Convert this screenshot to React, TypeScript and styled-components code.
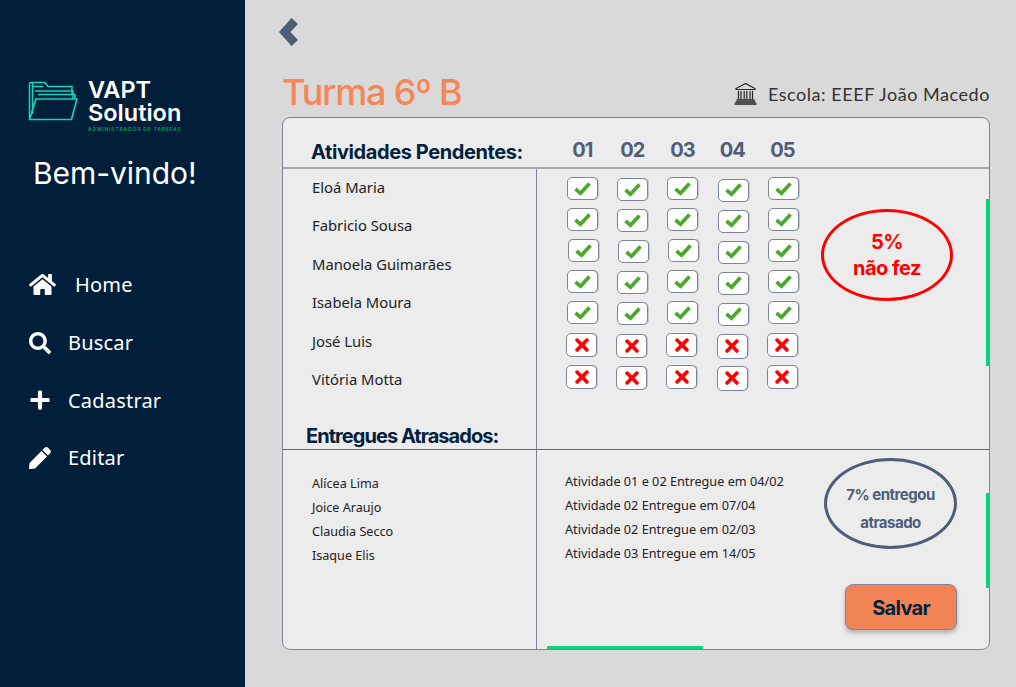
import React from "react";
import styled, { createGlobalStyle } from "styled-components";
import { FaHome, FaSearch, FaPlus, FaPen, FaTimes } from "react-icons/fa";

const Global = createGlobalStyle`
  html, body { margin: 0; padding: 0; height: 100%; overflow: hidden; }
  body { font-family: "Noto Sans", "Liberation Sans", sans-serif; }
  * { box-sizing: border-box; }
`;

const Page = styled.div`display: flex; width: 1016px; height: 687px; background: #d9d9d9;`;
const Sidebar = styled.aside`width: 245px; height: 100%; background: #011f3b; display: flex; flex-direction: column; padding: 80px 0 0 28px;`;
const Brand = styled.div`display: flex; gap: 10px; height: 53px;`;
const BrandText = styled.div`display: flex; flex-direction: column; color: #fff; font-family: Inter, sans-serif; font-weight: 600; font-size: 23.5px; line-height: 23px; margin-top: -2px;`;
const Tagline = styled.span`font-size: 5px; line-height: 6px; font-weight: 600; letter-spacing: 0.82px; color: #0a9c63; margin-top: 2px; white-space: nowrap;`;
const Welcome = styled.h2`margin: 23px 0 0 5px; color: #fff; font-family: Inter, sans-serif; font-weight: 400; font-size: 30px; line-height: 34px; letter-spacing: -0.05px;`;
const Nav = styled.nav`display: flex; flex-direction: column; margin-top: 66px;`;
const NavItem = styled.a<{ $gap: number }>`display: flex; align-items: center; height: 57.7px; color: #fff; font-size: 20px; gap: ${(p) => p.$gap}px; letter-spacing: 0.2px;`;
const NavIcon = styled.span`display: flex; width: 22px; margin-left: 1px; justify-content: flex-start; font-size: 22px; flex: none; > svg { flex: none; }`;

const Main = styled.main`flex: 1; display: flex; flex-direction: column; padding: 18px 26px 0 37px;`;
const Back = styled.svg`display: block; width: 20px; height: 28px; margin-left: -3px; fill: #4f5d78; flex: none;`;
const TitleRow = styled.div`display: flex; justify-content: space-between; align-items: center; height: 71px; padding-top: 20px;`;
const Title = styled.h1`margin: 0; font-family: Inter, sans-serif; font-weight: 500; font-size: 36px; line-height: 44px; color: #f58657; letter-spacing: -1.2px;`;
const School = styled.div`display: flex; align-items: center; gap: 11px; font-family: Lato, sans-serif; font-size: 18px; color: #333; letter-spacing: 0.55px; margin-top: 4px;`;

const Panel = styled.section`position: relative; height: 533px; background: #ececec; border: 1px solid #7c8598; border-radius: 8px; display: grid; grid-template-columns: 254px 1fr; grid-template-rows: 51px 281px 1fr;`;
const HeadRow = styled.div`grid-column: 1 / 3; display: flex; align-items: flex-end; border-bottom: 2px solid #a5a6ad; padding: 0 0 4px 28px;`;
const Heading = styled.h3`margin: 0; font-family: Inter, sans-serif; font-weight: 700; font-size: 20px; line-height: 26px; color: #03213d; letter-spacing: -0.4px; white-space: nowrap;`;
const PendingHeading = styled(Heading)`margin-bottom: -2px;`;
const Nums = styled.div`display: flex; margin-left: 34.5px;`;
const Num = styled.span`width: 50px; text-align: center; font-family: Inter, sans-serif; font-weight: 700; font-size: 20px; line-height: 26px; color: #4f5d78; letter-spacing: -1px;`;

const LeftCell = styled.div<{ $bottom?: boolean }>`border-right: 1px solid #7c8598; display: flex; flex-direction: column; padding-left: 29px; ${(p) => p.$bottom && "border-bottom: 1px solid #5a6680;"}`;
const Names = styled.div<{ $step: number; $size: number }>`display: flex; flex-direction: column; font-size: ${(p) => p.$size}px; color: #222; > span { height: ${(p) => p.$step}px; line-height: ${(p) => p.$step}px; }`;
const PendingNames = styled(Names)`margin-top: -1px;`;
const LateHeading = styled(Heading)`margin: auto 0 0 -6px; letter-spacing: -0.95px;`;
const RightCell = styled.div<{ $bottom?: boolean }>`display: flex; ${(p) => p.$bottom && "border-bottom: 1px solid #5a6680;"}`;

const Checks = styled.div`display: flex; flex-direction: column; flex: none; width: 284px; padding: 8px 0 0 30px;`;
const CheckRow = styled.div<{ $h: number; $x: number }>`display: flex; height: ${(p) => p.$h}px; margin-left: ${(p) => p.$x}px;`;
const Slot = styled.div<{ $y: number }>`flex: none; width: 50.2px; padding-top: ${(p) => p.$y}px;`;
const Box = styled.div<{ $ok: boolean }>`width: 31px; height: ${(p) => (p.$ok ? 23 : 24.5)}px; background: #fff; border: 1px solid #7c8598; border-radius: 5px; display: flex; align-items: center; justify-content: center; color: #ff0000; font-size: 20px; box-shadow: 1px 0 0 #c8c8cc;`;
const Tick = styled.svg`width: 17px; height: 14px; fill: none; stroke: #4aa92c; stroke-width: 3.7; flex: none;`;

const Ellipse = styled.div<{ $c: string; $w: number; $h: number; $size: number; $lh: number; $shift: number }>`width: ${(p) => p.$w}px; height: ${(p) => p.$h}px; border: 3px solid ${(p) => p.$c}; color: ${(p) => p.$c}; border-radius: 50%; display: flex; flex-direction: column; align-items: center; justify-content: center; flex: none; padding-top: ${(p) => p.$shift}px; font-family: Inter, sans-serif; font-weight: 700; letter-spacing: -0.5px; font-size: ${(p) => p.$size}px; line-height: ${(p) => p.$lh}px;`;
const RedWrap = styled.div`padding-top: 40px;`;

const LateNames = styled(Names)`margin-top: 22px;`;
const Lines = styled.div`display: flex; flex-direction: column; flex: none; padding: 19px 0 0 28px; width: 287px; font-size: 12.7px; color: #222; > span { height: 24px; line-height: 24px; }`;
const Side = styled.div`display: flex; flex-direction: column; align-items: flex-end; width: 133px; padding-top: 8px;`;
const Save = styled.button`width: 112px; height: 46px; margin-top: 35px; background: #f28354; border: 1px solid #7c8598; border-radius: 8px; box-shadow: 0 3px 4px rgba(0,0,0,.25); font-family: Inter, sans-serif; font-weight: 700; font-size: 20px; letter-spacing: -0.7px; color: #03213d; padding: 2px 0 0 0;`;

const Bar = styled.div<{ $top?: number; $left?: number; $w: number; $h: number }>`position: absolute; background: #0dd17f; width: ${(p) => p.$w}px; height: ${(p) => p.$h}px; top: ${(p) => p.$top}px; left: ${(p) => p.$left}px;`;

const LogoFolder = () => (
  <svg width="50" height="41" viewBox="0 0 50 41" fill="none" stroke="#16d3bd" strokeWidth="1.5">
    <path d="M1.5 38V4Q1.5 2.5 3 2.5H17L20 6.5H44V14" />
    <path d="M4.5 3V34M5 6.5H15" />
    <path d="M7 11H45V19M10 14.5H47V19" />
    <path d="M8 19H49L43.5 39.5H1.5Z" strokeWidth="1.7" />
  </svg>
);

const Bank = () => (
  <svg width="23" height="23" viewBox="0 0 23 23" fill="none" stroke="#222" strokeWidth="1.2">
    <path d="M11.5 1.5 2 6.5v1h19v-1z" />
    <path d="M4.5 9v8M7 9v8M10.2 9v8M12.8 9v8M16 9v8M18.5 9v8" />
    <path d="M2.5 18h18M1.5 20h20M.5 22h22" strokeWidth="1.5" />
  </svg>
);

const rows: { ok: boolean; h: number; x: number }[] = [
  { ok: true, h: 31, x: 0 },
  { ok: true, h: 31, x: 0 },
  { ok: true, h: 31, x: 0.7 },
  { ok: true, h: 31, x: 0 },
  { ok: true, h: 31.5, x: 0 },
  { ok: false, h: 32, x: -1 },
  { ok: false, h: 32, x: -1 },
];
const offsets = [0, 1, 0, 1.5, 0];
const nums = ["01", "02", "03", "04", "05"];

export default function App() {
  return (
    <Page>
      <Global />
      <Sidebar>
        <Brand>
          <LogoFolder />
          <BrandText>
            <span>VAPT</span>
            <span>Solution</span>
            <Tagline>ADMINISTRADOR DE TAREFAS</Tagline>
          </BrandText>
        </Brand>
        <Welcome>Bem-vindo!</Welcome>
        <Nav>
          <NavItem $gap={24}><NavIcon><FaHome size={27} /></NavIcon>Home</NavItem>
          <NavItem $gap={17}><NavIcon><FaSearch /></NavIcon>Buscar</NavItem>
          <NavItem $gap={17}><NavIcon><FaPlus /></NavIcon>Cadastrar</NavItem>
          <NavItem $gap={17}><NavIcon><FaPen /></NavIcon>Editar</NavItem>
        </Nav>
      </Sidebar>
      <Main>
        <Back viewBox="0 0 20 28"><polygon points="0,14 12.5,0 19,6 11.5,14 19,22 12.5,28" /></Back>
        <TitleRow>
          <Title>Turma 6º B</Title>
          <School><Bank />Escola: EEEF João Macedo</School>
        </TitleRow>
        <Panel>
          <HeadRow>
            <PendingHeading>Atividades Pendentes:</PendingHeading>
            <Nums>{nums.map((n) => <Num key={n}>{n}</Num>)}</Nums>
          </HeadRow>
          <LeftCell $bottom>
            <PendingNames $step={38.4} $size={14.8}>
              {["Eloá Maria", "Fabricio Sousa", "Manoela Guimarães", "Isabela Moura", "José Luis", "Vitória Motta"].map((n) => <span key={n}>{n}</span>)}
            </PendingNames>
            <LateHeading>Entregues Atrasados:</LateHeading>
          </LeftCell>
          <RightCell $bottom>
            <Checks>
              {rows.map((r, i) => (
                <CheckRow key={i} $h={r.h} $x={r.x}>
                  {offsets.map((y, j) => (
                    <Slot key={j} $y={y}>
                      <Box $ok={r.ok}>
                        {r.ok ? (
                          <Tick viewBox="0 0 17 14"><polyline points="1.5,7 6.5,11.3 15.5,1.5" /></Tick>
                        ) : (
                          <FaTimes />
                        )}
                      </Box>
                    </Slot>
                  ))}
                </CheckRow>
              ))}
            </Checks>
            <RedWrap>
              <Ellipse $c="#ff0000" $w={132} $h={92} $size={20} $lh={26} $shift={0}>
                <span>5%</span>
                <span>não fez</span>
              </Ellipse>
            </RedWrap>
          </RightCell>
          <LeftCell>
            <LateNames $step={24} $size={12.6}>
              {["Alícea Lima", "Joice Araujo", "Claudia Secco", "Isaque Elis"].map((n) => <span key={n}>{n}</span>)}
            </LateNames>
          </LeftCell>
          <RightCell>
            <Lines>
              <span>Atividade 01 e 02 Entregue em 04/02</span>
              <span>Atividade 02 Entregue em 07/04</span>
              <span>Atividade 02 Entregue em 02/03</span>
              <span>Atividade 03 Entregue em 14/05</span>
            </Lines>
            <Side>
              <Ellipse $c="#4f5d78" $w={133} $h={91} $size={15} $lh={28} $shift={10}>
                <span>7% entregou</span>
                <span>atrasado</span>
              </Ellipse>
              <Save>Salvar</Save>
            </Side>
          </RightCell>
          <Bar $top={81} $left={703} $w={4} $h={167} />
          <Bar $top={375} $left={703} $w={4} $h={95} />
          <Bar $top={528} $left={264} $w={156} $h={3} />
        </Panel>
      </Main>
    </Page>
  );
}
